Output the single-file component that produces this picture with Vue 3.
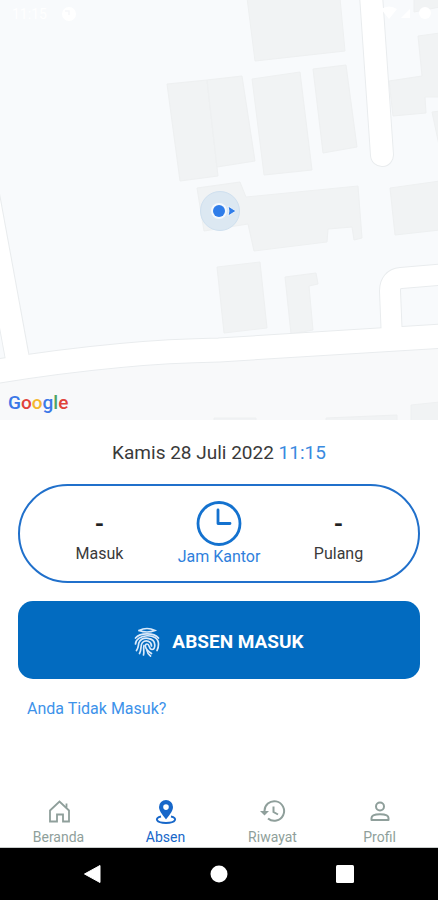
<script setup>
const letters = [
  { ch: 'G', tone: 'blue' },
  { ch: 'o', tone: 'red' },
  { ch: 'o', tone: 'yellow' },
  { ch: 'g', tone: 'blue' },
  { ch: 'l', tone: 'green' },
  { ch: 'e', tone: 'red' },
]
const tabs = [
  { id: 'home', label: 'Beranda' },
  { id: 'pin', label: 'Absen', active: true },
  { id: 'history', label: 'Riwayat' },
  { id: 'user', label: 'Profil' },
]
</script>

<template>
  <div class="screen">
    <section class="map">
      <svg class="map-art" viewBox="0 0 438 420" preserveAspectRatio="xMidYMid slice" aria-hidden="true">
        <rect width="438" height="420" fill="#f8fafc" />
        <path d="M0 383 C70 372 150 365 219 361 L438 347 V420 H0Z" fill="#f8f9fa" />
        <g fill="#f1f3f4" stroke="#eef0f1" stroke-width="1">
          <path d="M247 -2 L255 61 L345 51 L340 -2Z" />
          <path d="M167 84 L207 80 L218 176 L180 181Z" />
          <path d="M207 80 L242 76 L255 161 L217 167Z" />
          <path d="M252 79 L300 72 L312 170 L264 175Z" />
          <path d="M313 69 L346 65 L357 147 L323 153Z" />
          <path d="M414 -2 V12 L440 7 V-2Z" />
          <path d="M418 36 L440 33 V97 L425 97 L426 113 L393 116 L389 81 L422 76Z" />
          <path d="M440 111 L432 112 L440 150Z" />
          <path d="M390 188 L440 181 V230 L395 235Z" />
          <path d="M197 188 L240 182 L246 197 L358 186 L362 238 L354 240 L352 227 L328 229 L327 242 L254 251 L248 224 L204 231Z" />
          <path d="M217 267 L260 262 L267 328 L224 333Z" />
          <path d="M285 277 L316 273 L318 284 L309 286 L313 330 L291 334Z" />
          <path d="M411 405 L440 402 V422 H411Z" />
          <path d="M214 418 H256 V422 H214Z M326 418 L397 415 V422 H326Z" />
        </g>
        <g fill="none" stroke-linejoin="round">
          <g stroke="#e9ecee">
            <path d="M370 -20 L382 155" stroke-width="24" stroke-linecap="round" />
            <path d="M-17 170 L17 356" stroke-width="25" />
            <path d="M-20 374 C70 359 150 351 219 350 L460 335" stroke-width="25" />
            <path d="M392 340 L390 291 Q390 279 401 278 L460 273" stroke-width="22" />
          </g>
          <g stroke="#ffffff">
            <path d="M370 -20 L382 155" stroke-width="22" stroke-linecap="round" />
            <path d="M-17 170 L18 362" stroke-width="23" />
            <path d="M-20 374 C70 359 150 351 219 350 L460 335" stroke-width="23" />
            <path d="M392 340 L390 291 Q390 279 401 278 L460 273" stroke-width="20" />
          </g>
        </g>
        <circle cx="220" cy="211" r="19.500" fill="#dce8f2" stroke="#cfe0ef" />
        <circle cx="219" cy="211" r="8" fill="#f5f9fd" />
        <circle cx="219" cy="211" r="6" fill="#2f7de9" />
        <path d="M228 206 L236 211 L228 216 Q230 211 228 206Z" fill="#2f7de9" stroke="#f5f9fd" stroke-width="0.800" />
        <g fill="#ffffff">
          <circle cx="69" cy="14" r="7" />
          <path d="M381 9 Q389 4 397 9 L389 19Z" />
          <path d="M401 18 L410 9 V18Z" />
          <circle cx="425" cy="13" r="6" />
        </g>
        <path d="M65 11 H69 V15" fill="none" stroke="#f6f8fa" stroke-width="1.500" />
      </svg>
      <span class="status-time">11:15</span>
      <span class="google"><span v-for="(l, i) in letters" :key="i" :class="l.tone">{{ l.ch }}</span></span>
    </section>

    <main class="panel">
      <p class="date">Kamis 28 Juli 2022 <span class="now">11:15</span></p>

      <section class="hours">
        <div class="slot">
          <span class="value">-</span>
          <span class="caption">Masuk</span>
        </div>
        <div class="office">
          <svg class="clock" viewBox="0 0 46 46" fill="none" stroke="#1472cf" stroke-width="2.800" stroke-linecap="round" aria-hidden="true">
            <circle cx="23" cy="22.500" r="21" />
            <path d="M22 9 V22.500 H34" stroke-linejoin="round" />
          </svg>
          <span class="caption">Jam Kantor</span>
        </div>
        <div class="slot">
          <span class="value">-</span>
          <span class="caption">Pulang</span>
        </div>
      </section>

      <button class="submit" type="button">
        <svg class="finger" viewBox="0 0 26 30" fill="none" stroke="#dceafa" stroke-width="1.700" stroke-linecap="round" aria-hidden="true">
          <path d="M5 3.500 Q13 -0.500 21 3.500 Q13 6.500 5 3.500" />
          <path d="M1.500 11 C6 5.500 20 5.500 24.500 11" />
          <path d="M1.500 17 C1.500 7 24.500 5 24.500 17 Q24.500 21 23 23.500" />
          <path d="M2.500 23.500 C5 20 4 18 5 15.500 C8 9 20.500 10 20.800 18 Q20.800 22.500 18 22.500 C14.500 22.500 16 17 13 17 C10.500 17 10 22 17.500 26.500" />
          <path d="M5.500 26.500 C8 22 6 18 8.500 15.500 C12 12 17.500 14.500 17.500 19" />
          <path d="M9.500 28 C10.500 25 9 21 10 18.500" />
          <path d="M13 23.500 Q13.500 27 16.500 29" />
        </svg>
        <span>ABSEN MASUK</span>
      </button>

      <a class="absent" href="#absent">Anda Tidak Masuk?</a>
    </main>

    <nav class="tabs">
      <a v-for="t in tabs" :key="t.id" :href="'#' + t.id" class="tab" :class="{ active: t.active }">
        <svg v-if="t.id === 'home'" class="icon" viewBox="0 0 26 26" fill="none" stroke="currentColor" stroke-width="1.800" aria-hidden="true">
          <path d="M4 22.500 V11.500 L13.500 2.500 L23 11.500 V22.500 H17 V15.500 H11 V22.500Z" />
          <path d="M20.500 8.500 V4.500" />
        </svg>
        <svg v-else-if="t.id === 'pin'" class="icon" viewBox="0 0 26 26" aria-hidden="true">
          <path fill="currentColor" fill-rule="evenodd" d="M13 1 A7 7 0 0 0 6 8 C6 12.500 11 17.500 13 20.500 C15 17.500 20 12.500 20 8 A7 7 0 0 0 13 1Z M13 5.300 A2.800 2.800 0 1 1 13 10.900 A2.800 2.800 0 1 1 13 5.300Z" />
          <path d="M8 17.500 C1 19 3 24 13 24 C23 24 25 19 18 17.500" fill="none" stroke="currentColor" stroke-width="1.900" />
        </svg>
        <svg v-else-if="t.id === 'history'" class="icon" viewBox="0 0 26 26" fill="none" stroke="currentColor" stroke-width="2" aria-hidden="true">
          <path d="M4.500 14 V12.500 A9.800 9.800 0 1 1 8 19.500" />
          <path d="M13.500 7.500 V13 L18 15.500" />
          <path d="M0 12 H9 L4.500 16.500Z" fill="currentColor" stroke="none" />
        </svg>
        <svg v-else class="icon" viewBox="0 0 26 26" fill="none" stroke="currentColor" stroke-width="2" aria-hidden="true">
          <circle cx="13" cy="7.500" r="4" />
          <path d="M4.500 21 V19 C4.500 14 21.500 14 21.500 19 V21Z" stroke-linejoin="round" />
        </svg>
        <span>{{ t.label }}</span>
      </a>
    </nav>

    <footer class="system">
      <button type="button" aria-label="Back">
        <svg viewBox="0 0 20 20" aria-hidden="true"><path d="M1.500 10 L17 1.500 V18.500Z" fill="#fff" stroke="#fff" stroke-linejoin="round" /></svg>
      </button>
      <button type="button" aria-label="Home">
        <svg viewBox="0 0 20 20" aria-hidden="true"><circle cx="10" cy="10" r="8.500" fill="#fff" /></svg>
      </button>
      <button type="button" aria-label="Recent">
        <svg viewBox="0 0 20 20" aria-hidden="true"><rect x="1" y="1" width="18" height="18" rx="1.500" fill="#fff" /></svg>
      </button>
    </footer>
  </div>
</template>

<style>
body {
  margin: 0;
  background: #fff;
}
</style>

<style scoped>
.screen {
  display: flex;
  flex-direction: column;
  min-height: 100vh;
  background: #fff;
  color: #3a3a3a;
  font-family: Roboto, "Liberation Sans", sans-serif;
}
.map {
  position: relative;
  height: 420px;
  overflow: hidden;
}
.map-art {
  display: block;
  width: 100%;
  height: 100%;
}
.status-time {
  position: absolute;
  top: 6px;
  left: 12px;
  font-size: 14px;
  line-height: 16px;
  color: #fff;
}
.google {
  position: absolute;
  left: 8px;
  bottom: 5px;
  font-size: 19px;
  font-weight: 500;
  line-height: 24px;
}
.blue { color: #3b78e7; }
.red { color: #e0433a; }
.yellow { color: #f4b72f; }
.green { color: #4fa463; }

.panel {
  display: flex;
  flex: 1;
  flex-direction: column;
  padding: 20px 18px;
}
.date {
  margin: 0 0 18px;
  font-size: 19px;
  line-height: 26px;
  text-align: center;
}
.now { color: #3a8ae0; }
.hours {
  display: grid;
  grid-template-columns: 1fr 80px 1fr;
  align-items: center;
  box-sizing: border-box;
  min-height: 99px;
  border: 2px solid #2070cb;
  border-radius: 50px;
}
.slot,
.office {
  display: flex;
  flex-direction: column;
  align-items: center;
  white-space: nowrap;
}
.slot {
  gap: 4px;
  padding-top: 4px;
}
.value {
  font-size: 24px;
  font-weight: 700;
  line-height: 32px;
  color: #222;
}
.caption {
  font-size: 16px;
  line-height: 20px;
}
.office { color: #2f7fdc; }
.clock {
  width: 46px;
  height: 46px;
}
.submit {
  display: flex;
  align-items: center;
  justify-content: center;
  gap: 12px;
  min-height: 78px;
  margin-top: 18px;
  padding: 4px 16px 0;
  border: 0;
  border-radius: 15px;
  background: #026bc0;
  color: #fff;
  font: 700 19px/24px Roboto, "Liberation Sans", sans-serif;
}
.finger {
  width: 26px;
  height: 30px;
}
.absent {
  align-self: flex-start;
  margin: 20px 9px 0;
  color: #3d92ea;
  font-size: 16px;
  line-height: 20px;
  text-decoration: none;
}
.tabs {
  display: grid;
  grid-template-columns: repeat(4, 1fr);
  padding: 0 5px;
  border-bottom: 1px solid #c8cccb;
}
.tab {
  display: flex;
  flex-direction: column;
  align-items: center;
  gap: 2px;
  color: #8f9f9b;
  font-size: 14px;
  line-height: 20px;
  text-decoration: none;
}
.tab.active { color: #1767c9; }
.icon {
  width: 26px;
  height: 26px;
}
.system {
  display: flex;
  align-items: center;
  justify-content: center;
  gap: 106px;
  height: 52px;
  background: #000;
}
.system button {
  display: flex;
  padding: 0;
  border: 0;
  background: none;
}
.system svg {
  width: 20px;
  height: 20px;
}
</style>
